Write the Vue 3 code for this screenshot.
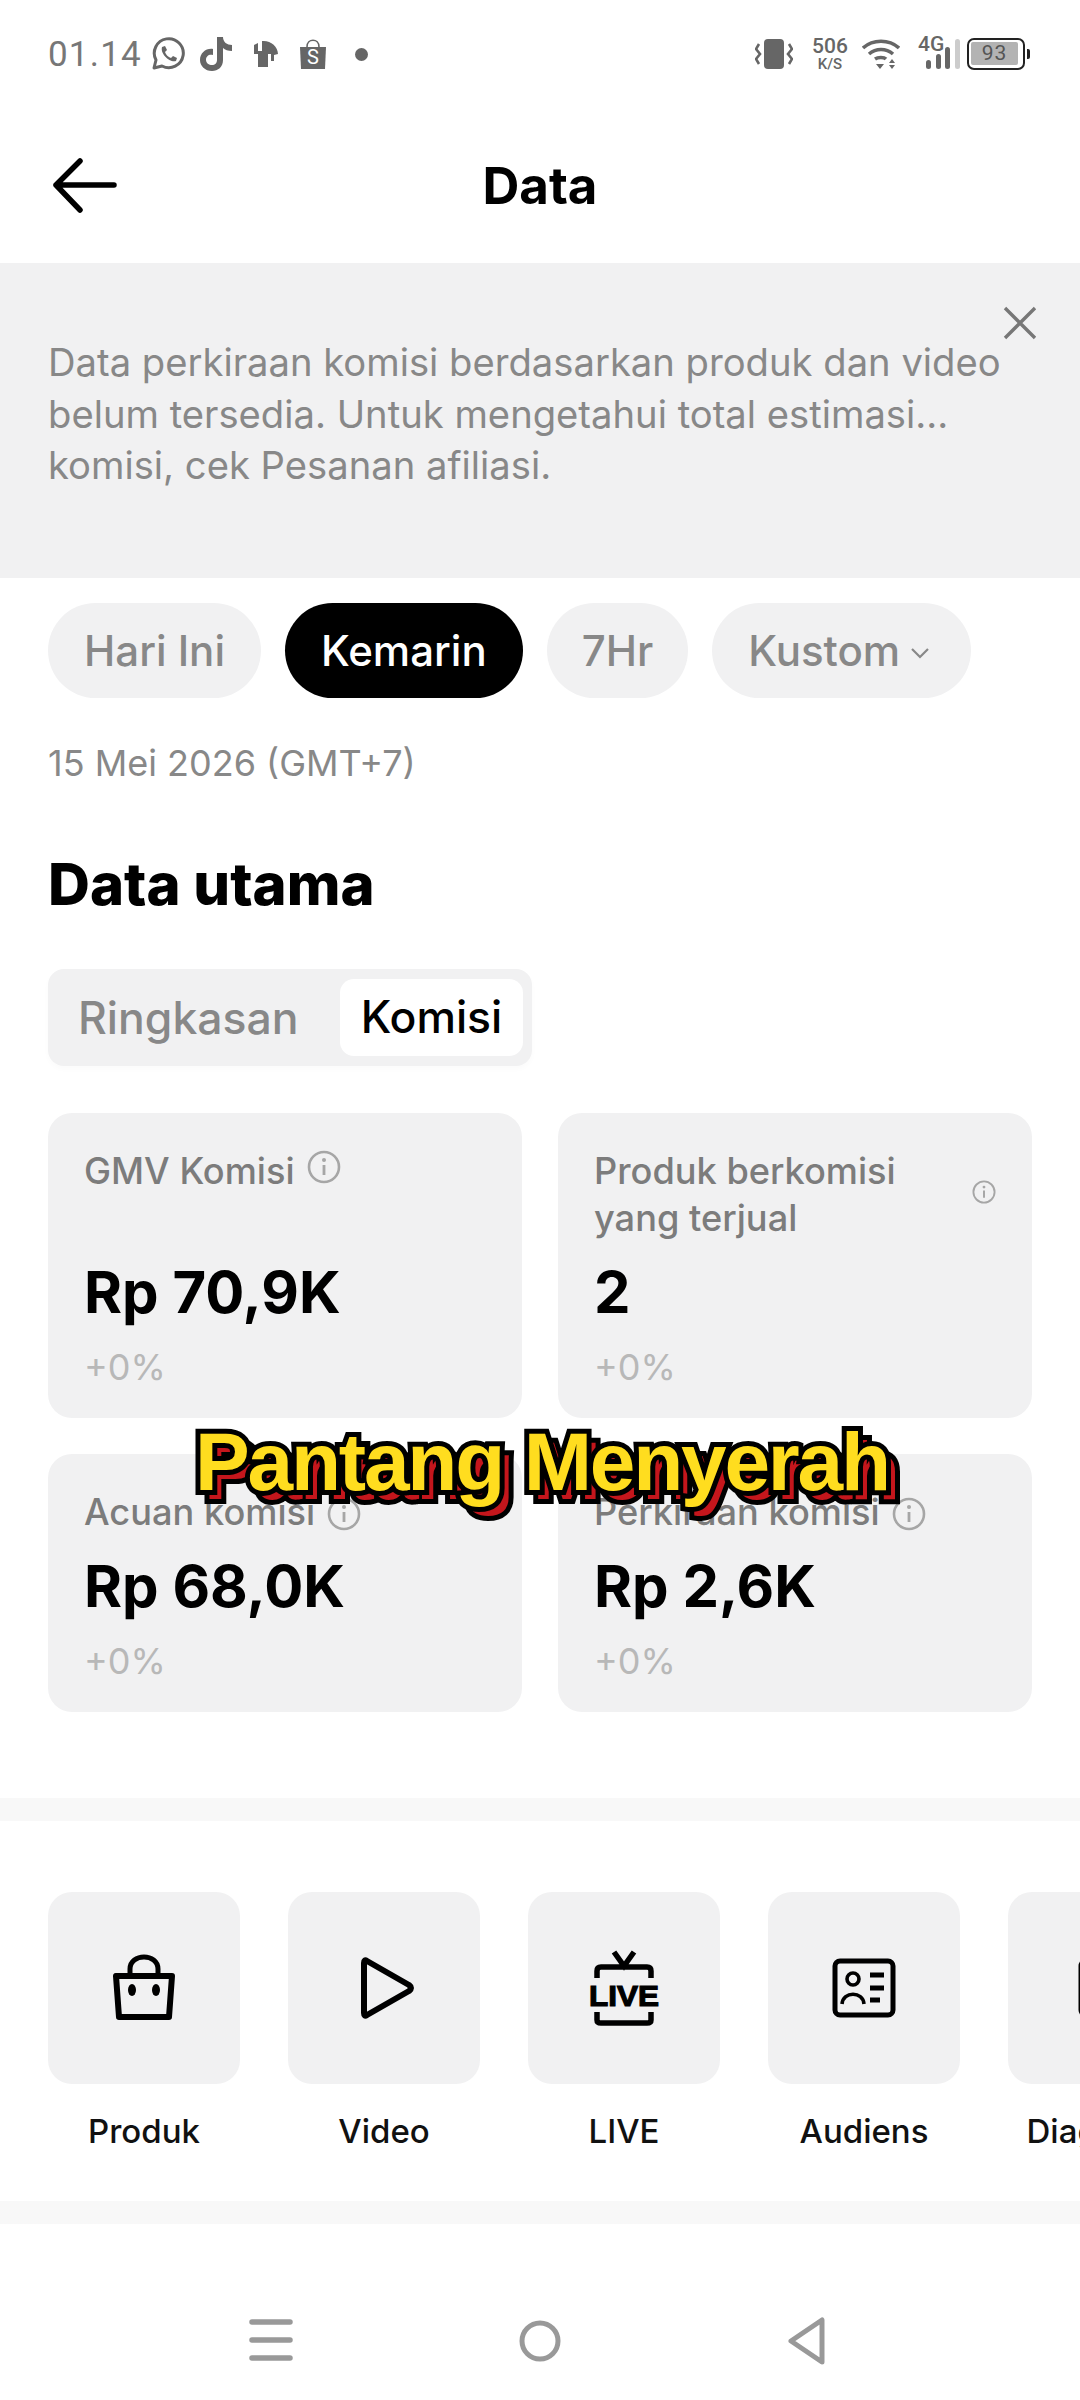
<template>
  <div class="page">
    <div class="statusBar">
      <div class="statusLeft">
        <span class="time">01.14</span>
        <svg class="wa" width="34" height="34" viewBox="0 0 34 34">
          <path d="M3 31 L5 23 A14.5 14.5 0 1 1 11 29 Z" fill="none" stroke="#666" stroke-width="3" stroke-linejoin="round" />
          <path d="M11 10 L14 9 L16 13 L14 15 C15 18 17 20 20 21 L22 19 L26 21 L25 24 C19 26 9 17 11 10 Z" fill="#666" />
        </svg>
        <svg class="tt" width="32" height="36" viewBox="0 0 32 36">
          <path d="M17 1 H23 C23 6 27 9 32 9 V15 C28 15 25 14 23 12 V24 C23 31 18 35 12 35 C5 35 0 30 0 24 C0 17 6 12 13 13 V19 C9 18 6 20 6 24 C6 27 9 29 12 29 C15 29 17 27 17 24 Z" fill="#666" />
        </svg>
        <svg class="blur" width="26" height="28" viewBox="0 0 26 28">
          <path d="M9 1 C17 0 25 6 25 14 L21 15 V21 H18 V14 H15 V27 H5 V14 H1 V5 L5 3 V11 H9 Z" fill="#666" />
        </svg>
        <svg class="shop" width="28" height="30" viewBox="0 0 28 30">
          <path d="M8 8 C8 -1 20 -1 20 8" fill="none" stroke="#666" stroke-width="1.6" />
          <path d="M1 8 H27 L26 30 H2 Z" fill="#666" />
          <text x="14" y="25" text-anchor="middle" class="shopS">S</text>
        </svg>
        <span class="dot"></span>
      </div>
      <div class="statusRight">
        <svg class="vib" width="38" height="32" viewBox="0 0 38 32">
          <rect x="9" y="1" width="20" height="30" rx="4" fill="#666" />
          <path d="M4 6 L1 11 L5 16 L1 21 L4 26 M34 6 L37 11 L33 16 L37 21 L34 26" fill="none" stroke="#666" stroke-width="2.6" />
        </svg>
        <div class="speed"><span>506</span><span class="unit">K/S</span></div>
        <svg class="wifi" width="38" height="32" viewBox="0 0 38 32">
          <path d="M1 10 C11 1 27 1 37 10 M7 16 C14 10 24 10 31 16 M13 21 C16 19 22 19 24 21" fill="none" stroke="#666" stroke-width="3.6" />
          <path d="M14 26 H22 L18 31 Z M30 21 L33 25 H27 Z M27 27 H33 L30 31 Z" fill="#666" />
        </svg>
        <div class="cell">
          <span class="fourG">4G</span>
          <svg width="36" height="32" viewBox="0 0 36 32">
            <rect x="0" y="22" width="5" height="9" rx="2.5" fill="#666" />
            <rect x="10" y="16" width="5" height="15" rx="2.5" fill="#666" />
            <rect x="19" y="9" width="5" height="22" rx="2.5" fill="#666" />
            <rect x="29" y="1" width="5" height="30" rx="2.5" fill="#ccc" />
          </svg>
        </div>
        <div class="battery">
          <div class="batteryBody"><span>93</span></div>
          <span class="batteryNub"></span>
        </div>
      </div>
    </div>

    <div class="header">
      <svg class="back" width="64" height="56" viewBox="0 0 64 56">
        <path d="M61 27 H3 M27 3 L3 27 L27 52" fill="none" stroke="#000" stroke-width="5.5" stroke-linecap="round" stroke-linejoin="round" />
      </svg>
      <span class="title">Data</span>
    </div>

    <div class="banner">
      <p>Data perkiraan komisi berdasarkan produk dan video belum tersedia. Untuk mengetahui total estimasi... komisi, cek Pesanan afiliasi.</p>
      <svg class="close" width="34" height="34" viewBox="0 0 34 34">
        <path d="M2 2 L32 32 M32 2 L2 32" stroke="#777" stroke-width="3.4" />
      </svg>
    </div>

    <div class="pills">
      <div v-for="p in pills" :key="p" class="pill" :class="{ active: p === 'Kemarin', custom: p === 'Kustom' }">
        {{ p }}
        <svg v-if="p === 'Kustom'" class="chev" width="20" height="12" viewBox="0 0 20 12">
          <path d="M2 2 L10 10 L18 2" fill="none" stroke="#888" stroke-width="2.2" />
        </svg>
      </div>
    </div>

    <div class="date">15 Mei 2026 (GMT+7)</div>
    <h2 class="heading">Data utama</h2>

    <div class="segment">
      <span class="segItem">Ringkasan</span>
      <span class="segItem on">Komisi</span>
    </div>

    <div class="cards">
      <div v-for="c in cards" :key="c.label" class="card" :class="{ tall: c.tall }">
        <div class="cardLabel">
          <span class="labelText" :class="{ wrap: c.small }">{{ c.label }}</span>
          <svg class="info" :class="{ small: c.small }" viewBox="0 0 34 34">
            <circle cx="17" cy="17" r="15" fill="none" stroke="#a6a6a6" stroke-width="2.6" />
            <circle cx="17" cy="10" r="2" fill="#a6a6a6" />
            <path d="M17 15 V25" stroke="#a6a6a6" stroke-width="2.8" />
          </svg>
        </div>
        <div class="cardValue">{{ c.value }}</div>
        <div class="cardDelta">+0%</div>
      </div>
    </div>

    <div class="band first"></div>

    <div class="tiles">
      <div class="tile">
        <div class="tileBox">
          <svg width="64" height="68" viewBox="0 0 64 68">
            <path d="M18 22 V15 C18 -1 46 -1 46 15 V22" fill="none" stroke="#000" stroke-width="5" />
            <path d="M4 22 H60 L57 63 H7 Z" fill="none" stroke="#000" stroke-width="6" stroke-linejoin="round" />
            <ellipse cx="20" cy="36" rx="4" ry="6" fill="#000" />
            <ellipse cx="44" cy="36" rx="4" ry="6" fill="#000" />
          </svg>
        </div>
        <span class="tileName">Produk</span>
      </div>
      <div class="tile">
        <div class="tileBox">
          <svg class="play" width="56" height="64" viewBox="0 0 56 64">
            <path d="M8 5 Q5 3 5 7 V57 Q5 61 8 59 L50 35 Q54 32 50 29 Z" fill="none" stroke="#000" stroke-width="6" stroke-linejoin="round" />
          </svg>
        </div>
        <span class="tileName">Video</span>
      </div>
      <div class="tile">
        <div class="tileBox">
          <svg width="72" height="76" viewBox="0 0 72 76">
            <path d="M26 2 L36 16 L46 2 M9 28 V21 Q9 17 13 17 H59 Q63 17 63 21 V28 M9 62 V70 Q9 73 13 73 H59 Q63 73 63 70 V62" fill="none" stroke="#000" stroke-width="5.5" />
            <text x="36" y="56" text-anchor="middle" textLength="70" lengthAdjust="spacingAndGlyphs" class="liveText">LIVE</text>
          </svg>
        </div>
        <span class="tileName">LIVE</span>
      </div>
      <div class="tile">
        <div class="tileBox">
          <svg width="64" height="60" viewBox="0 0 64 60">
            <rect x="3" y="3" width="58" height="54" rx="5" fill="none" stroke="#000" stroke-width="5" />
            <circle cx="21" cy="21" r="6" fill="none" stroke="#000" stroke-width="3.6" />
            <path d="M10 46 C11 33 31 33 32 46" fill="none" stroke="#000" stroke-width="3.6" />
            <path d="M38 17 H52 M38 30 H52 M38 42 H48" stroke="#000" stroke-width="5" />
          </svg>
        </div>
        <span class="tileName">Audiens</span>
      </div>
      <div class="tile">
        <div class="tileBox">
          <svg width="52" height="60" viewBox="0 0 52 60">
            <rect x="3" y="3" width="46" height="54" rx="5" fill="none" stroke="#000" stroke-width="5" />
          </svg>
        </div>
        <span class="tileName">Diagnosis</span>
      </div>
    </div>

    <div class="band second"></div>

    <div class="navBar">
      <svg width="44" height="44" viewBox="0 0 44 44">
        <path d="M3 3 H41 M3 21 H41 M3 39 H41" stroke="#999" stroke-width="5.5" stroke-linecap="round" />
      </svg>
      <svg width="42" height="44" viewBox="0 0 42 44">
        <circle cx="21" cy="22" r="18" fill="none" stroke="#999" stroke-width="5" />
      </svg>
      <svg width="40" height="48" viewBox="0 0 40 48">
        <path d="M35 3 V45 L4 24 Z" fill="none" stroke="#999" stroke-width="5" stroke-linejoin="round" />
      </svg>
    </div>

    <div class="caption" data-text="Pantang Menyerah">Pantang Menyerah</div>
  </div>
</template>

<script setup>
const pills = ['Hari Ini', 'Kemarin', '7Hr', 'Kustom']

const cards = [
  { label: 'GMV Komisi', value: 'Rp 70,9K', tall: true },
  { label: 'Produk berkomisi yang terjual', value: '2', tall: true, small: true },
  { label: 'Acuan komisi', value: 'Rp 68,0K' },
  { label: 'Perkiraan komisi', value: 'Rp 2,6K' }
]
</script>

<style>
body {
  background: #fff;
}
</style>

<style scoped>
.page {
  position: relative;
  width: 1080px;
  height: 2400px;
  overflow: hidden;
  background: #fff;
  font-family: Inter, "Liberation Sans", sans-serif;
}
.statusBar {
  height: 108px;
  padding: 0 50px 0 48px;
  box-sizing: border-box;
  display: flex;
  align-items: center;
  justify-content: space-between;
  color: #666;
}
.statusLeft,
.statusRight {
  display: flex;
  align-items: center;
}
.time {
  font-family: Roboto, sans-serif;
  font-size: 35px;
  letter-spacing: 1.2px;
  color: #777;
  width: 103px;
}
.tt {
  margin-left: 15px;
}
.blur {
  margin-left: 21px;
}
.shop {
  margin-left: 20px;
}
.shopS {
  font-family: Roboto, sans-serif;
  font-size: 20px;
  fill: #fff;
}
.dot {
  width: 13px;
  height: 13px;
  border-radius: 50%;
  background: #666;
  margin-left: 28px;
}
.speed {
  display: flex;
  flex-direction: column;
  align-items: center;
  font-family: Roboto, sans-serif;
  font-size: 21px;
  font-weight: 500;
  line-height: 20px;
  margin-left: 20px;
  width: 34px;
}
.unit {
  font-size: 15px;
  line-height: 16px;
}
.wifi {
  margin-left: 15px;
}
.cell {
  position: relative;
  display: flex;
  margin-left: 18px;
  width: 44px;
  justify-content: flex-end;
}
.fourG {
  position: absolute;
  left: 0;
  top: -6px;
  font-family: Roboto, sans-serif;
  font-size: 21px;
  font-weight: 500;
}
.battery {
  display: flex;
  align-items: center;
  margin-left: 5px;
}
.batteryBody {
  width: 58px;
  height: 32px;
  box-sizing: border-box;
  border: 2.5px solid #222;
  border-radius: 7px;
  padding: 2px 5px 3px 2px;
}
.batteryBody span {
  display: block;
  height: 100%;
  background: #b3b3b3;
  border-radius: 2px;
  font-family: Roboto, sans-serif;
  font-size: 21px;
  line-height: 23px;
  letter-spacing: 1px;
  text-align: center;
  color: #555;
}
.batteryNub {
  width: 3px;
  height: 10px;
  margin-left: 2px;
  background: #222;
  border-radius: 0 2px 2px 0;
}
.header {
  position: relative;
  height: 155px;
  display: flex;
  align-items: center;
  justify-content: center;
}
.back {
  position: absolute;
  left: 53px;
  top: 50px;
}
.title {
  font-size: 51px;
  font-weight: 700;
  color: #000;
}
.banner {
  position: relative;
  height: 315px;
  background: #f1f1f2;
  padding: 74px 40px 0 48px;
  box-sizing: border-box;
}
.banner p {
  margin: 0;
  width: 965px;
  font-size: 38.2px;
  line-height: 51.5px;
  color: #888;
}
.close {
  position: absolute;
  right: 43px;
  top: 43px;
}
.pills {
  display: flex;
  gap: 24px;
  padding: 25px 48px 0;
}
.pill {
  height: 95px;
  padding: 0 36px;
  border-radius: 48px;
  background: #f1f1f2;
  color: #888;
  font-size: 42px;
  font-weight: 500;
  display: flex;
  align-items: center;
  gap: 10px;
  line-height: 92px;
}
.pill:nth-child(3) {
  padding: 0 35px;
}
.pill.active {
  background: #000;
  color: #fff;
}
.pill.custom {
  padding-right: 41px;
}
.chev {
  margin-top: 4px;
}
.date {
  margin: 43px 48px 0;
  font-size: 36px;
  line-height: 44px;
  color: #888;
}
.heading {
  margin: 62px 48px 0;
  font-size: 58px;
  line-height: 74px;
  font-weight: 800;
  color: #000;
}
.segment {
  display: flex;
  align-items: center;
  justify-content: space-between;
  width: 484px;
  height: 97px;
  margin: 48px 48px 0;
  padding: 0 9px 0 30px;
  box-sizing: border-box;
  background: #f1f1f2;
  border-radius: 16px;
  box-shadow: 0 3px 6px rgba(0, 0, 0, 0.02);
}
.segItem {
  font-size: 44.5px;
  font-weight: 500;
  color: #888;
}
.segItem.on {
  width: 183px;
  height: 77px;
  line-height: 77px;
  text-align: center;
  background: #fff;
  border-radius: 14px;
  color: #000;
}
.cards {
  display: grid;
  grid-template-columns: 474px 474px;
  column-gap: 36px;
  row-gap: 36px;
  padding: 47px 48px 0;
}
.card {
  height: 258px;
  padding: 35px 36px 0;
  box-sizing: border-box;
  background: #f1f1f2;
  border-radius: 24px;
}
.card.tall {
  height: 305px;
}
.cardLabel {
  display: flex;
  align-items: center;
  justify-content: flex-start;
  min-height: 46px;
  gap: 12px;
}
.card.tall .cardLabel {
  height: 94px;
  align-items: flex-start;
}
.labelText {
  font-size: 36.2px;
  line-height: 47px;
  font-weight: 500;
  color: #7c7c7c;
}
.labelText.wrap {
  width: 340px;
}
.info {
  width: 34px;
  height: 34px;
  flex: none;
  margin-top: 2px;
}
.info.small {
  width: 24px;
  height: 24px;
  margin: 32px 0 0 auto;
}
.cardValue {
  margin-top: 13px;
  font-size: 58px;
  line-height: 74px;
  font-weight: 700;
  color: #000;
}
.cardDelta {
  margin-top: 16px;
  font-size: 36px;
  line-height: 44px;
  color: #b8b8b8;
}
.band {
  height: 23px;
  background: #f8f8f8;
}
.band.first {
  margin-top: 86px;
}
.band.second {
  margin-top: 42px;
}
.tiles {
  display: flex;
  gap: 48px;
  padding: 71px 0 0 48px;
}
.tile {
  flex: none;
  width: 192px;
  display: flex;
  flex-direction: column;
  align-items: center;
}
.tileBox {
  width: 192px;
  height: 192px;
  border-radius: 24px;
  background: #f1f1f2;
  display: flex;
  align-items: center;
  justify-content: center;
}
.play {
  margin-left: 6px;
}
.tileName {
  margin-top: 19px;
  font-size: 33px;
  line-height: 56px;
  font-weight: 500;
  color: #111;
  white-space: nowrap;
}
.liveText {
  font-family: "Liberation Sans", sans-serif;
  font-size: 30px;
  font-weight: 700;
  stroke: #000;
  stroke-width: 1.2;
  fill: #000;
}
.navBar {
  display: flex;
  align-items: center;
  justify-content: space-between;
  width: 578px;
  margin: 93px 0 0 249px;
}
.caption {
  position: absolute;
  left: 195px;
  top: 1412px;
  font-family: "Liberation Sans", Arial, sans-serif;
  font-size: 82px;
  line-height: 100px;
  font-weight: 700;
  letter-spacing: -2.2px;
  white-space: nowrap;
  color: #ffdd1f;
  -webkit-text-stroke: 10px #000;
  paint-order: stroke fill;
  isolation: isolate;
}
.caption::before {
  content: attr(data-text);
  position: absolute;
  left: 9px;
  top: 9px;
  z-index: -1;
  color: #c4161c;
}
</style>
